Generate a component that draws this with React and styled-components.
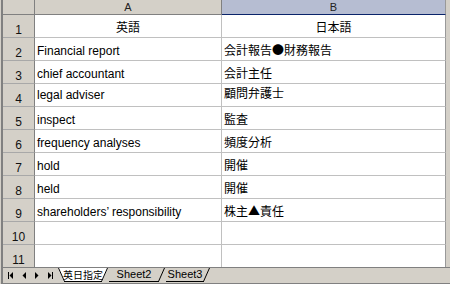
import React from 'react';
import styled, { createGlobalStyle } from 'styled-components';

const Global = createGlobalStyle`
  html, body { margin: 0; padding: 0; background: #d4d0c8; }
  body { font-family: "Liberation Sans", "Noto Sans CJK JP", sans-serif; color: #000; }
`;

const Window = styled.div`
  width: 450px;
  height: 284px;
  box-sizing: border-box;
  background: #d4d0c8;
  border-left: 1px solid #d4d0c8;
  overflow: hidden;
`;

const Frame = styled.div`
  height: 100%;
  display: flex;
  flex-direction: column;
  border-left: 2px solid #808080;
`;

const SheetArea = styled.div`
  display: flex;
  padding-right: 4px;
`;

const Grid = styled.div`
  display: grid;
  grid-template-columns: 32px 187px 224px;
  grid-template-rows: 15px repeat(10, 23px) 22px;
`;

const Corner = styled.div`
  background: #d4d0c8;
  border-right: 1px solid #808080;
  border-bottom: 1px solid #808080;
`;

const ColHeader = styled.div`
  background: ${p => (p.$selected ? '#b6bdd2' : '#d4d0c8')};
  border-right: 1px solid ${p => (p.$last ? '#999' : '#808080')};
  border-bottom: 1px solid ${p => (p.$selected ? '#0a246a' : '#808080')};
  font-size: 11px;
  line-height: 14px;
  text-align: center;
  color: #222;
`;

const RowHeader = styled.div`
  background: #d4d0c8;
  border-right: 1px solid #808080;
  border-bottom: ${p => (p.$last ? 'none' : '1px solid #a8a8a8')};
  display: flex;
  align-items: flex-end;
  justify-content: center;
  font-size: 12px;
  line-height: 14px;
  color: #111;
`;

const Cell = styled.div`
  background: #fff;
  border-right: 1px solid ${p => (p.$last ? '#999' : '#c0c0c0')};
  border-bottom: ${p => (p.$lastRow ? 'none' : '1px solid #c0c0c0')};
  display: flex;
  align-items: flex-end;
  justify-content: ${p => (p.$center ? 'center' : 'flex-start')};
  padding: 0 2px ${p => (p.$cjk ? 3 : 2) + (p.$lift || 0)}px 2px;
  font-family: ${p => (p.$cjk ? '"Noto Sans CJK JP", sans-serif' : '"Liberation Sans", "Noto Sans CJK JP", sans-serif')};
  font-size: 12px;
  line-height: 14px;
  white-space: nowrap;
  color: #000;
`;

const TabBar = styled.div`
  height: 17px;
  box-sizing: border-box;
  border-top: 1px solid #808080;
  border-bottom: 1px solid #808080;
  display: flex;
  align-items: flex-start;
`;

const NavGroup = styled.div`
  width: 55px;
  height: 15px;
  display: flex;
  align-items: center;
  gap: 1px;
  padding-left: 2px;
  box-sizing: border-box;
`;

const NavButton = styled.svg`
  width: 12px;
  height: 9px;
  display: block;
`;

const Tabs = styled.div`
  display: flex;
`;

const Tab = styled.div`
  position: relative;
  width: ${p => p.$w}px;
  height: 14px;
  margin-left: ${p => (p.$first ? 0 : -5)}px;
  z-index: ${p => p.$z};
  display: flex;
  align-items: flex-end;
  justify-content: center;
`;

const TabShape = styled.svg`
  position: absolute;
  left: 0;
  top: 0;
  width: 100%;
  height: 100%;
  overflow: visible;
`;

const TabLabel = styled.span`
  position: relative;
  font-family: ${p => (p.$cjk ? '"Noto Sans CJK JP", sans-serif' : '"Liberation Sans", sans-serif')};
  font-size: ${p => (p.$cjk ? 10 : 11)}px;
  line-height: 13px;
  padding-bottom: 1px;
  color: #000;
`;

const rows = [
  { a: '英語', b: '日本語', center: true },
  { a: 'Financial report', b: '会計報告●財務報告' },
  { a: 'chief accountant', b: '会計主任' },
  { a: 'legal adviser', b: '顧問弁護士', liftA: 2, liftB: 3 },
  { a: 'inspect', b: '監査' },
  { a: 'frequency analyses', b: '頻度分析' },
  { a: 'hold', b: '開催' },
  { a: 'held', b: '開催' },
  { a: 'shareholders’ responsibility', b: '株主▲責任' },
  { a: '', b: '' },
  { a: '', b: '' },
];

const tabs = [
  { name: '英日指定', w: 50, active: true, cjk: true },
  { name: 'Sheet2', w: 62 },
  { name: 'Sheet3', w: 50 },
];

function TabItem({ tab, index }) {
  const h = 13.5;
  const s = 6;
  const w = tab.w;
  const fill = tab.active ? '#ffffff' : '#d4d0c8';
  const pts = `0,0 ${s},${h} ${w - s},${h} ${w},0`;
  return (
    <Tab $w={w} $first={index === 0} $z={10 - index}>
      <TabShape viewBox={`0 0 ${w} 14`} preserveAspectRatio="none">
        <polygon points={pts} fill={fill} />
        {index === 0 && <line x1="0.5" y1="0" x2={s + 0.5} y2={h} stroke="#000" strokeWidth="1" />}
        <line x1={s} y1={h} x2={w - s} y2={h} stroke="#000" strokeWidth="1" />
        <line x1={w - s - 0.5} y1={h} x2={w - 0.5} y2="0" stroke="#000" strokeWidth="1" />
      </TabShape>
      <TabLabel $cjk={tab.cjk}>{tab.name}</TabLabel>
    </Tab>
  );
}

export default function App() {
  return (
    <>
      <Global />
      <Window>
        <Frame>
          <SheetArea>
            <Grid>
              <Corner />
              <ColHeader>A</ColHeader>
              <ColHeader $selected $last>B</ColHeader>
              {rows.map((r, i) => {
                const lastRow = i === rows.length - 1;
                return (
                  <React.Fragment key={i}>
                    <RowHeader $last={lastRow}>{i + 1}</RowHeader>
                    <Cell $center={r.center} $cjk={r.center} $lastRow={lastRow} $lift={r.liftA}>{r.a}</Cell>
                    <Cell $center={r.center} $cjk $last $lastRow={lastRow} $lift={r.liftB}>{r.b}</Cell>
                  </React.Fragment>
                );
              })}
            </Grid>
          </SheetArea>
          <TabBar>
            <NavGroup>
              <NavButton viewBox="0 0 12 9">
                <rect x="3" y="1" width="1" height="7" fill="#000" />
                <polygon points="8,1 8,8 4.5,4.5" fill="#000" />
              </NavButton>
              <NavButton viewBox="0 0 12 9">
                <polygon points="8,1 8,8 4.5,4.5" fill="#000" />
              </NavButton>
              <NavButton viewBox="0 0 12 9">
                <polygon points="4,1 4,8 7.5,4.5" fill="#000" />
              </NavButton>
              <NavButton viewBox="0 0 12 9">
                <polygon points="4,1 4,8 7.5,4.5" fill="#000" />
                <rect x="8" y="1" width="1" height="7" fill="#000" />
              </NavButton>
            </NavGroup>
            <Tabs>
              {tabs.map((t, i) => (
                <TabItem key={t.name} tab={t} index={i} />
              ))}
            </Tabs>
          </TabBar>
        </Frame>
      </Window>
    </>
  );
}
